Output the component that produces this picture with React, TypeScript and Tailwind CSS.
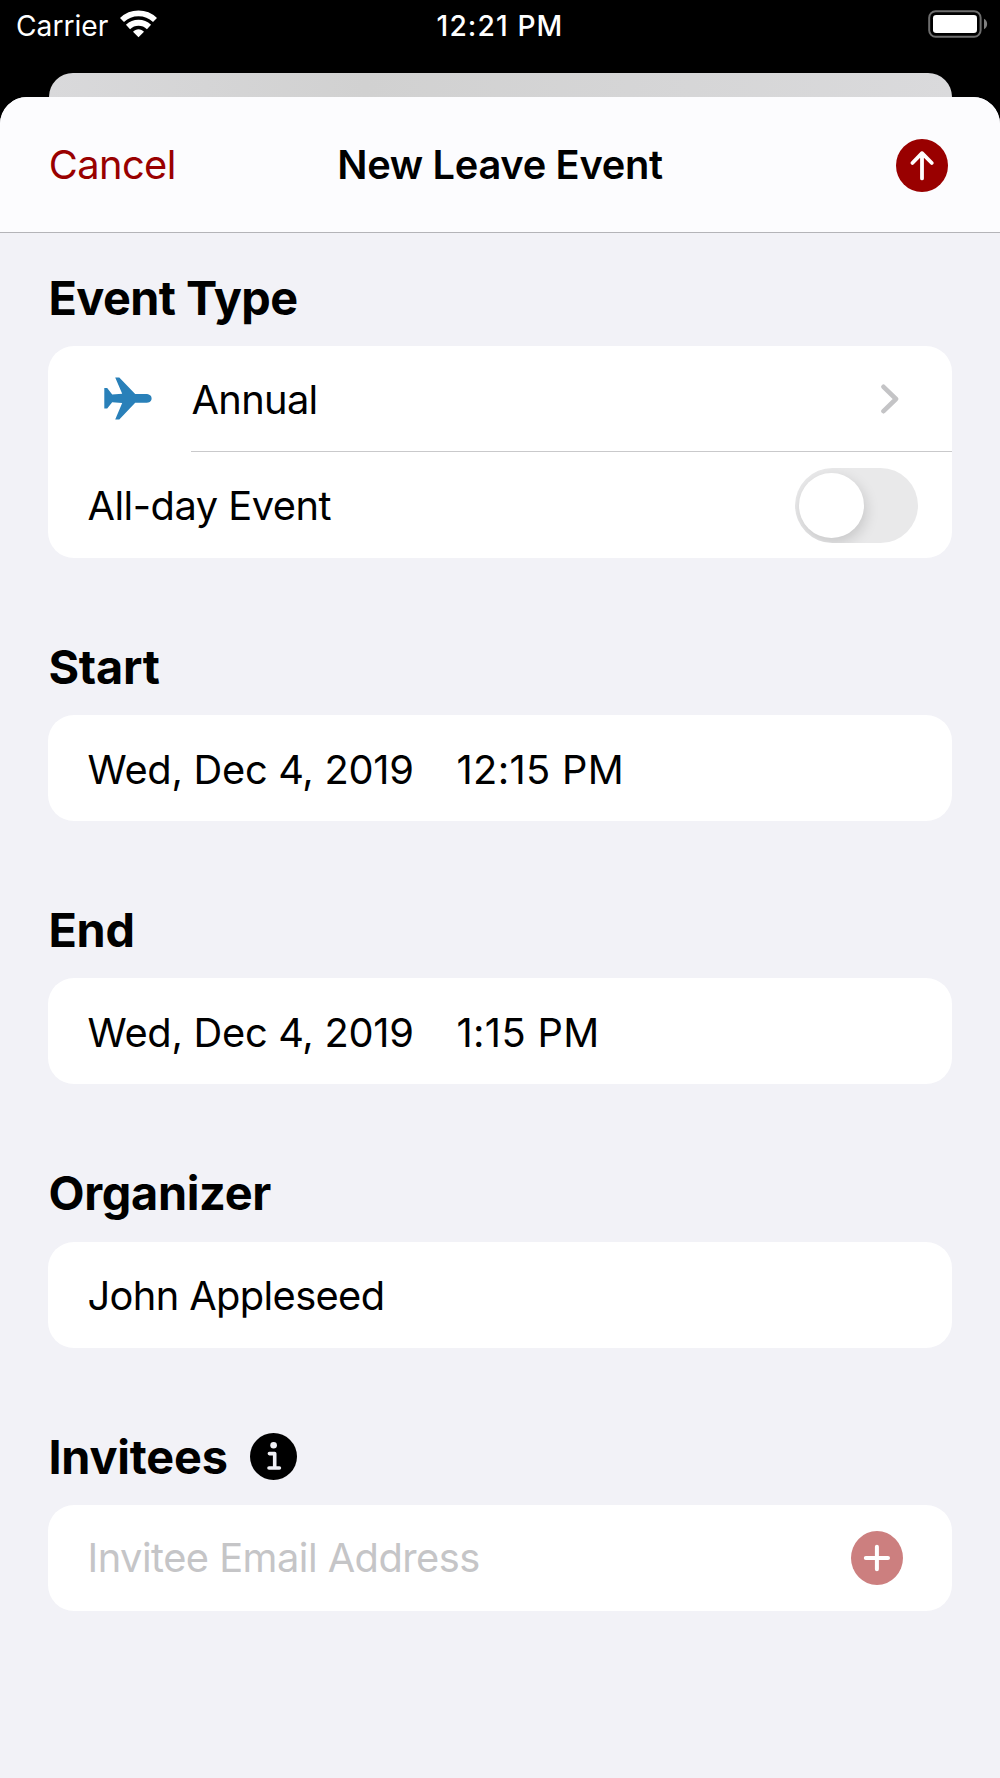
import type { ReactNode } from 'react';

function WifiIcon() {
  return (
    <svg viewBox="0 0 37 28" className="w-[37px] h-[28px]" fill="none" stroke="white">
      <path d="M2 10C11.3 1.2 25.7 1.2 35 10" strokeWidth="5.8" />
      <path d="M8 17C14 11.4 23 11.4 29 17" strokeWidth="6" />
      <path d="M18.5 27.3L13 21.8C16 18.4 21 18.4 24 21.8Z" fill="white" stroke="none" />
    </svg>
  );
}

function BatteryIcon() {
  return (
    <svg viewBox="0 0 60 28" className="w-[60px] h-[28px]">
      <rect x="1.2" y="1.2" width="51.4" height="25.6" rx="6.5" fill="none" stroke="#6e6e6e" strokeWidth="2" />
      <rect x="5" y="5" width="44" height="18" rx="3.2" fill="white" />
      <path d="M56 8.8C60.2 11 60.2 17 56 19.2Z" fill="#808080" />
    </svg>
  );
}

function PlaneIcon() {
  return (
    <svg viewBox="0 0 48 43" className="w-[48px] h-[43px]" fill="#2980b9">
      <path d="M0.3 10.9H3.2L8.2 17.6L18.2 16.8L11.2 0.6H15.3L31.2 17H41.5C45.5 17 47.6 18.8 47.6 21.4C47.6 24 45.5 25.8 41.5 25.8H31.2L15.3 42.4H11.2L18.2 26L8.2 25.2L3.2 31.6H0.3Z" />
    </svg>
  );
}

function ArrowUpIcon() {
  return (
    <svg viewBox="0 0 52 53" className="w-[52px] h-[53px]">
      <ellipse cx="26" cy="26.5" rx="26" ry="26.5" fill="#990000" />
      <path d="M26 39.4V14.2M16.4 24L26 14.2L35.8 24" fill="none" stroke="white" strokeWidth="3.8" strokeLinecap="round" strokeLinejoin="round" />
    </svg>
  );
}

function PlusIcon() {
  return (
    <svg viewBox="0 0 52 54" className="w-[52px] h-[54px]">
      <ellipse cx="26" cy="27" rx="26" ry="27" fill="#cc7f7f" />
      <path d="M25.9 15.8V38.2M14.8 27H37" fill="none" stroke="white" strokeWidth="4" strokeLinecap="round" />
    </svg>
  );
}

function InfoIcon() {
  return (
    <svg viewBox="0 0 47 47" className="w-[47px] h-[47px]">
      <circle cx="23.5" cy="23.5" r="23.5" fill="black" />
      <circle cx="23.6" cy="12.3" r="3.3" fill="#f2f2f7" />
      <path d="M19.4 20.6H24.7V35M19 35H29.4" fill="none" stroke="#f2f2f7" strokeWidth="3.6" strokeLinecap="round" strokeLinejoin="round" />
    </svg>
  );
}

function ChevronIcon() {
  return (
    <svg viewBox="0 0 18 30" className="w-[18px] h-[30px]">
      <path d="M2.5 2.8L15 15L2.5 27.2" fill="none" stroke="#c4c4c6" strokeWidth="4.6" strokeLinecap="round" strokeLinejoin="round" />
    </svg>
  );
}

interface SectionProps {
  title: string;
  tracking?: string;
  icon?: ReactNode;
  children: ReactNode;
}

function Section({ title, tracking = 'tracking-[-0.2px]', icon, children }: SectionProps) {
  return (
    <section className="mb-[51px]">
      <div className="h-[106.3px] pt-[10px] flex items-center gap-[22.5px]">
        <h2 className={`text-[46.8px] leading-[50px] font-bold whitespace-nowrap pl-[0.4px] ${tracking}`}>{title}</h2>
        {icon}
      </div>
      <div className="bg-white rounded-[26px] overflow-hidden">{children}</div>
    </section>
  );
}

function Row({ children }: { children: ReactNode }) {
  return <div className="h-[106px] pl-[39.5px] flex items-center whitespace-nowrap">{children}</div>;
}

const events = [
  { title: 'Start', date: 'Wed, Dec 4, 2019', time: '12:15 PM' },
  { title: 'End', date: 'Wed, Dec 4, 2019', time: '1:15 PM' },
];

export default function App() {
  return (
    <div className="w-[1000px] h-[1778px] bg-black overflow-hidden flex flex-col font-['Inter','Liberation_Sans',sans-serif] text-[39.8px] leading-none text-black">
      {/* Status bar */}
      <div className="h-[72.5px] shrink-0 grid grid-cols-3 items-start text-white text-[28.2px] leading-[52px]">
        <div className="pl-[16px] flex">
          <span className="w-[104px]">Carrier</span>
          <div className="pt-[10px]"><WifiIcon /></div>
        </div>
        <div className="text-center font-medium whitespace-nowrap tracking-[1.1px]">12:21 PM</div>
        <div className="pt-[10px] pr-[12px] flex justify-end"><BatteryIcon /></div>
      </div>

      {/* Edge of the card behind the sheet */}
      <div className="h-[50px] -mb-[25.5px] mx-[48.5px] shrink-0 rounded-t-[24px] bg-linear-to-r from-[#d9d9db] via-[#d1d1d1] via-35% to-[#dadadc]" />

      <div className="relative flex-1 bg-[#f2f2f7] rounded-t-[27px] overflow-hidden">
        <header className="h-[136px] bg-[#fcfcfe] border-b border-[#b4b4b8] px-[48px] grid grid-cols-[1fr_auto_1fr] items-center">
          <button className="text-left text-[#990000] tracking-[-0.6px] pl-[0.8px]">Cancel</button>
          <h1 className="font-semibold whitespace-nowrap tracking-[-0.3px]">New Leave Event</h1>
          <div className="flex justify-end pr-[4px] pt-px"><ArrowUpIcon /></div>
        </header>

        <main className="px-[48px] pt-[6.4px]">
          <Section title="Event Type" tracking="tracking-[-0.55px]">
            <div className="h-[106px] pl-[56px] flex items-center">
              <PlaneIcon />
              <div className="ml-[39px] h-full flex-1 flex items-center justify-between border-b border-[#c9c9cb] pr-[53.5px]">
                <span className="pt-[3px] pl-[0.5px] tracking-[-0.65px]">Annual</span>
                <div className="pt-px"><ChevronIcon /></div>
              </div>
            </div>
            <Row>
              <span className="pt-[2px] tracking-[-0.5px]">All-day Event</span>
              <div className="ml-auto mr-[34px] mt-px w-[123.5px] h-[75px] p-[5px] pl-[4.5px] rounded-full bg-[#e9e9ea] overflow-hidden">
                <div className="size-[65px] rounded-full bg-white shadow-[2px_5px_14px_rgba(0,0,0,0.15)]" />
              </div>
            </Row>
          </Section>

          {events.map((event) => (
            <Section key={event.title} title={event.title}>
              <Row>
                <span className="w-[369px] pt-[3px] tracking-[-0.28px]">{event.date}</span>
                <span className="pt-[3px] tracking-[0.35px]">{event.time}</span>
              </Row>
            </Section>
          ))}

          <Section title="Organizer" tracking="tracking-[-0.3px]">
            <Row>
              <span className="pt-[3px] tracking-[-0.62px]">John Appleseed</span>
            </Row>
          </Section>

          <Section title="Invitees" icon={<InfoIcon />}>
            <Row>
              <span className="text-[#c5c5c7] tracking-[-0.52px]">Invitee Email Address</span>
              <div className="ml-auto mr-[49px] pt-px"><PlusIcon /></div>
            </Row>
          </Section>
        </main>
      </div>
    </div>
  );
}
